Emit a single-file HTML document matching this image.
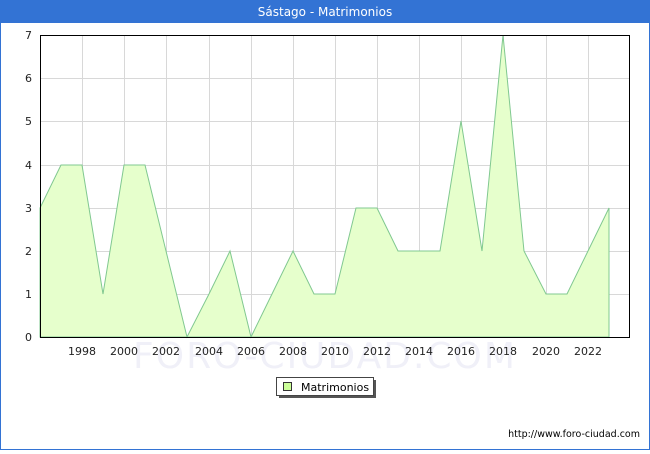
<!DOCTYPE html>
<html><head><meta charset="utf-8"><style>
body{margin:0;width:650px;height:450px;overflow:hidden;background:#fff;font-family:"DejaVu Sans","Liberation Sans",sans-serif}
</style></head><body>
<svg width="650" height="450" xmlns="http://www.w3.org/2000/svg" font-family="DejaVu Sans, Liberation Sans, sans-serif">
<rect x="0.5" y="0.5" width="649" height="449" fill="#fff" stroke="#3373d4"/>
<rect x="0" y="0" width="650" height="23" fill="#3373d4"/>
<text x="325" y="16" fill="#fff" font-size="12" text-anchor="middle">Sástago - Matrimonios</text>
<text x="325" y="368" fill="#f0f0f8" font-size="36" text-anchor="middle" letter-spacing="2">FORO-CIUDAD.COM</text>
<g stroke="#d8d8d8" stroke-width="1">
<path d="M40 294.5H630M40 251.5H630M40 208.5H630M40 165.5H630M40 121.5H630M40 78.5H630"/>
<path d="M82.5 35V337M124.5 35V337M166.5 35V337M209.5 35V337M251.5 35V337M293.5 35V337M335.5 35V337M377.5 35V337M419.5 35V337M461.5 35V337M503.5 35V337M546.5 35V337M588.5 35V337"/>
</g>
<polygon fill="#e6ffcc" stroke="#80c890" stroke-width="1" points="40,337 40,208 61,165 82,165 103,294 124,165 145,165 166,251 187,337 209,294 230,251 251,337 272,294 293,251 314,294 335,294 356,208 377,208 398,251 419,251 440,251 461,121 482,251 503,35 524,251 546,294 567,294 588,251 609,208 609,337"/>
<rect x="40.5" y="35.5" width="589" height="302" fill="none" stroke="#000"/>
<g font-size="11" fill="#222" text-anchor="end">
<text x="32" y="341">0</text><text x="32" y="298">1</text><text x="32" y="255">2</text><text x="32" y="212">3</text><text x="32" y="169">4</text><text x="32" y="125">5</text><text x="32" y="82">6</text><text x="32" y="39">7</text>
</g>
<g font-size="11" fill="#222" text-anchor="middle">
<text x="82" y="355">1998</text><text x="124" y="355">2000</text><text x="166" y="355">2002</text><text x="209" y="355">2004</text><text x="251" y="355">2006</text><text x="293" y="355">2008</text><text x="335" y="355">2010</text><text x="377" y="355">2012</text><text x="419" y="355">2014</text><text x="461" y="355">2016</text><text x="503" y="355">2018</text><text x="546" y="355">2020</text><text x="588" y="355">2022</text>
</g>
<rect x="279" y="380" width="97" height="18" fill="#555"/>
<rect x="276.5" y="377.5" width="97" height="18" fill="#fff" stroke="#444"/>
<rect x="283.5" y="382.5" width="8" height="8" fill="#ccff99" stroke="#333"/>
<text x="301" y="391" font-size="11" fill="#000">Matrimonios</text>
<text x="640" y="437" font-size="9.5" fill="#000" text-anchor="end">http://www.foro-ciudad.com</text>
</svg>
</body></html>
